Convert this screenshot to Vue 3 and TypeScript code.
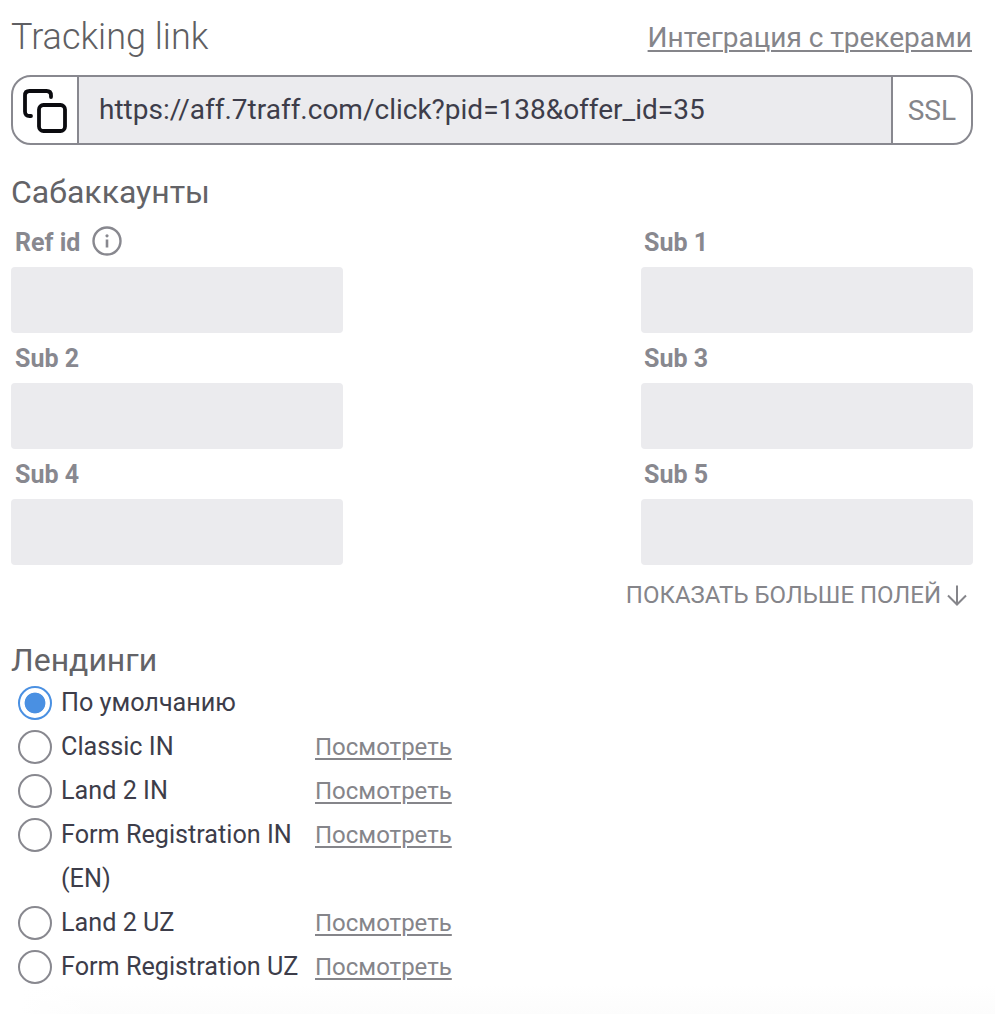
<script setup lang="ts">
const fieldsList: string[] = ['Ref id', 'Sub 1', 'Sub 2', 'Sub 3', 'Sub 4', 'Sub 5']
const landings: { name: string; checked?: boolean; preview: boolean }[] = [
  { name: 'По умолчанию', checked: true, preview: false },
  { name: 'Classic IN', preview: true },
  { name: 'Land 2 IN', preview: true },
  { name: 'Form Registration IN (EN)', preview: true },
  { name: 'Land 2 UZ', preview: true },
  { name: 'Form Registration UZ', preview: true }
]
</script>

<template>
  <div class="page">
    <header class="head">
      <h1 class="title">Tracking link</h1>
      <a class="integr">Интеграция с трекерами</a>
    </header>

    <div class="linkbar">
      <div class="copy">
        <svg width="44" height="46" viewBox="0 0 44 46" fill="none" stroke="#0b0b0f" stroke-width="3.800" stroke-linecap="round" stroke-linejoin="round">
          <path d="M8 29H6.500Q2 29 2 24.500V8.500Q2 4 6.500 4H23.500Q28 4 28 8.500V10" />
          <rect x="16" y="18" width="26" height="26" rx="4.500" />
        </svg>
      </div>
      <div class="url">https://aff.7traff.com/click?pid=138&amp;offer_id=35</div>
      <div class="ssl">SSL</div>
    </div>

    <h2 class="section sub-title">Сабаккаунты</h2>

    <div class="fields">
      <div v-for="f in fieldsList" :key="f" class="field">
        <div class="label">
          <span>{{ f }}</span>
          <svg v-if="f === 'Ref id'" class="info" width="30" height="30" viewBox="0 0 30 30" fill="none">
            <circle cx="15" cy="15" r="13.500" stroke="#88888f" stroke-width="2.400" />
            <rect x="13.700" y="13.500" width="2.600" height="8" fill="#88888f" />
            <circle cx="15" cy="9.800" r="1.600" fill="#88888f" />
          </svg>
        </div>
        <div class="box"></div>
      </div>
    </div>

    <div class="more">
      <span>ПОКАЗАТЬ БОЛЬШЕ ПОЛЕЙ</span>
      <svg width="24" height="24" viewBox="0 0 24 24" fill="none" stroke="#85858a" stroke-width="2">
        <path d="M12 2.500V21M3 12.500L12 21.500L21 12.500" />
      </svg>
    </div>

    <h2 class="section land-title">Лендинги</h2>

    <div class="landings">
      <div v-for="l in landings" :key="l.name" class="row">
        <span class="radio" :class="{ on: l.checked }"></span>
        <span class="name">{{ l.name }}</span>
        <a v-if="l.preview" class="view">Посмотреть</a>
      </div>
    </div>
  </div>
</template>

<style scoped>
.page {
  width: 995px;
  height: 1014px;
  box-sizing: border-box;
  padding: 0 22px 0 11px;
  font-family: Roboto, "Liberation Sans", sans-serif;
  background:
    linear-gradient(90deg, #fff 20px, rgba(255, 255, 255, 0) 100px),
    linear-gradient(#fff 985px, #fcfcfc 1014px);
  overflow: hidden;
}
.head {
  display: flex;
  justify-content: space-between;
  align-items: center;
  height: 75px;
}
.title {
  margin: 0;
  font-size: 36px;
  font-weight: 300;
  color: #5f5f63;
  position: relative;
  top: -1px;
}
.integr {
  font-size: 28px;
  margin-right: 1px;
  color: #85858a;
  text-decoration: underline;
  text-underline-offset: 3px;
  text-decoration-thickness: 2px;
}
.linkbar {
  display: flex;
  height: 70px;
  box-sizing: border-box;
  border: 2px solid #88888f;
  border-radius: 20px;
  overflow: hidden;
}
.copy {
  flex: none;
  width: 64px;
  border-right: 2px solid #88888f;
  display: flex;
  align-items: center;
  justify-content: center;
}
.url {
  flex: 1;
  background: #ebebee;
  color: #3d3d4a;
  font-size: 28px;
  line-height: 66px;
  padding-left: 20px;
}
.ssl {
  width: 80px;
  flex: none;
  border-left: 2px solid #88888f;
  color: #85858a;
  font-size: 28px;
  line-height: 68px;
  text-align: right;
  padding-right: 15px;
  box-sizing: border-box;
}
.section {
  margin: 0;
  font-weight: 400;
  font-size: 32px;
  color: #636367;
  line-height: 40px;
}
.sub-title {
  margin-top: 27px;
}
.fields {
  display: grid;
  grid-template-columns: 332px 332px;
  justify-content: space-between;
  margin-top: 5px;
}
.field {
  height: 116px;
}
.label {
  height: 50px;
  display: flex;
  align-items: center;
  padding-left: 4px;
  gap: 12px;
  font-size: 25px;
  font-weight: 700;
  color: #88888f;
}
.field:nth-child(even) .label {
  padding-left: 3px;
}
.info {
  flex: none;
  margin-top: -2px;
}
.box {
  height: 66px;
  background: #ebebee;
  border-radius: 4px;
}
.more {
  display: flex;
  justify-content: flex-end;
  align-items: center;
  gap: 4px;
  height: 42px;
  margin-top: 9px;
  padding-right: 4px;
  font-size: 24px;
  color: #85858a;
}
.land-title {
  margin-top: 24px;
}
.landings {
  margin-left: 7px;
  margin-top: 1px;
}
.row {
  display: grid;
  grid-template-columns: 34px 245px auto;
  column-gap: 9px;
  line-height: 44px;
  font-size: 25.200px;
  color: #3d3d4a;
  justify-content: start;
}
.radio {
  width: 34px;
  height: 34px;
  box-sizing: border-box;
  border: 2px solid #88888f;
  border-radius: 50%;
  margin-top: 5px;
  background: #fff;
}
.radio.on {
  border-color: #4a90e2;
  background: radial-gradient(circle, #4a90e2 0, #4a90e2 10px, #fff 10.800px);
}
.view {
  color: #85858a;
  font-size: 24px;
  text-decoration: underline;
  text-underline-offset: 3px;
  text-decoration-thickness: 2px;
}
</style>
